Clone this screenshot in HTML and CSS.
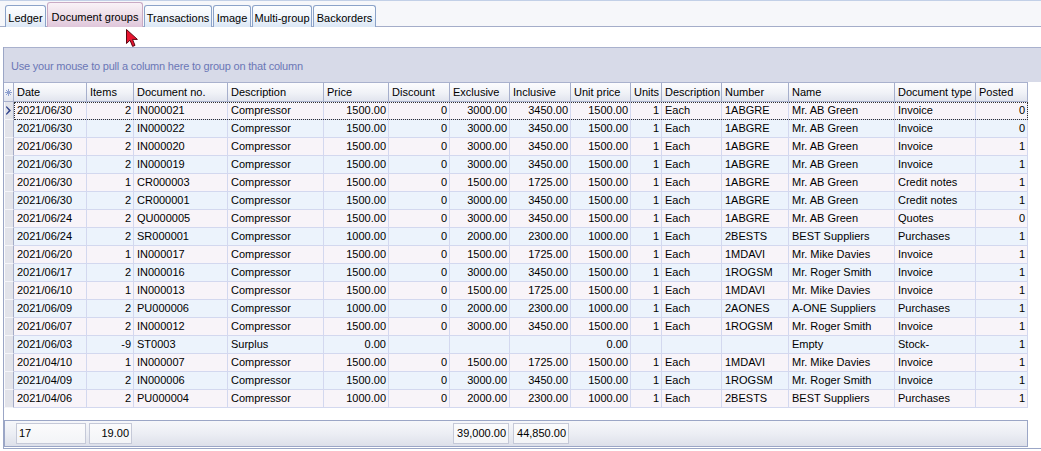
FILE: index.html
```html
<!DOCTYPE html>
<html>
<head>
<meta charset="utf-8">
<link rel="stylesheet" href="styles.css">
</head>
<body>
<div class="topline"></div>
<div class="tabbar">
  <div class="tab w-ledger">Ledger</div>
  <div class="tab tab-active w-docgroups">Document groups</div>
  <div class="tab w-trans">Transactions</div>
  <div class="tab w-image">Image</div>
  <div class="tab w-multi">Multi-group</div>
  <div class="tab w-back">Backorders</div>
</div>
<div class="spacer"></div>
<div class="frame">
  <div class="grouppanel">Use your mouse to pull a column here to group on that column</div>
  <div class="hrow">
    <div class="hind"><svg width="7" height="7" viewBox="0 0 7 7"><path d="M3.5 0V7M0 3.5H7M1 1L6 6M6 1L1 6" stroke="#8ea0cf" stroke-width="1" fill="none"/></svg></div>
    <div>Date</div><div>Items</div><div>Document no.</div><div>Description</div><div>Price</div><div>Discount</div><div>Exclusive</div><div>Inclusive</div><div>Unit price</div><div>Units</div><div>Description</div><div>Number</div><div>Name</div><div>Document type</div><div>Posted</div>
  </div>
  <div class="rows">
    <div class="row focus"><div class="ind"><svg width="6" height="9" viewBox="0 0 6 9"><path d="M0.5 0L5 4.5L0.5 9L0 7.8L2.8 4.5L0 1.2Z" fill="#33458c"/></svg></div><div>2021/06/30</div><div>2</div><div>IN000021</div><div>Compressor</div><div>1500.00</div><div>0</div><div>3000.00</div><div>3450.00</div><div>1500.00</div><div>1</div><div>Each</div><div>1ABGRE</div><div>Mr. AB Green</div><div>Invoice</div><div>0</div></div>
    <div class="row"><div class="ind"></div><div>2021/06/30</div><div>2</div><div>IN000022</div><div>Compressor</div><div>1500.00</div><div>0</div><div>3000.00</div><div>3450.00</div><div>1500.00</div><div>1</div><div>Each</div><div>1ABGRE</div><div>Mr. AB Green</div><div>Invoice</div><div>0</div></div>
    <div class="row"><div class="ind"></div><div>2021/06/30</div><div>2</div><div>IN000020</div><div>Compressor</div><div>1500.00</div><div>0</div><div>3000.00</div><div>3450.00</div><div>1500.00</div><div>1</div><div>Each</div><div>1ABGRE</div><div>Mr. AB Green</div><div>Invoice</div><div>1</div></div>
    <div class="row"><div class="ind"></div><div>2021/06/30</div><div>2</div><div>IN000019</div><div>Compressor</div><div>1500.00</div><div>0</div><div>3000.00</div><div>3450.00</div><div>1500.00</div><div>1</div><div>Each</div><div>1ABGRE</div><div>Mr. AB Green</div><div>Invoice</div><div>1</div></div>
    <div class="row"><div class="ind"></div><div>2021/06/30</div><div>1</div><div>CR000003</div><div>Compressor</div><div>1500.00</div><div>0</div><div>1500.00</div><div>1725.00</div><div>1500.00</div><div>1</div><div>Each</div><div>1ABGRE</div><div>Mr. AB Green</div><div>Credit notes</div><div>1</div></div>
    <div class="row"><div class="ind"></div><div>2021/06/30</div><div>2</div><div>CR000001</div><div>Compressor</div><div>1500.00</div><div>0</div><div>3000.00</div><div>3450.00</div><div>1500.00</div><div>1</div><div>Each</div><div>1ABGRE</div><div>Mr. AB Green</div><div>Credit notes</div><div>1</div></div>
    <div class="row"><div class="ind"></div><div>2021/06/24</div><div>2</div><div>QU000005</div><div>Compressor</div><div>1500.00</div><div>0</div><div>3000.00</div><div>3450.00</div><div>1500.00</div><div>1</div><div>Each</div><div>1ABGRE</div><div>Mr. AB Green</div><div>Quotes</div><div>0</div></div>
    <div class="row"><div class="ind"></div><div>2021/06/24</div><div>2</div><div>SR000001</div><div>Compressor</div><div>1000.00</div><div>0</div><div>2000.00</div><div>2300.00</div><div>1000.00</div><div>1</div><div>Each</div><div>2BESTS</div><div>BEST Suppliers</div><div>Purchases</div><div>1</div></div>
    <div class="row"><div class="ind"></div><div>2021/06/20</div><div>1</div><div>IN000017</div><div>Compressor</div><div>1500.00</div><div>0</div><div>1500.00</div><div>1725.00</div><div>1500.00</div><div>1</div><div>Each</div><div>1MDAVI</div><div>Mr. Mike Davies</div><div>Invoice</div><div>1</div></div>
    <div class="row"><div class="ind"></div><div>2021/06/17</div><div>2</div><div>IN000016</div><div>Compressor</div><div>1500.00</div><div>0</div><div>3000.00</div><div>3450.00</div><div>1500.00</div><div>1</div><div>Each</div><div>1ROGSM</div><div>Mr. Roger Smith</div><div>Invoice</div><div>1</div></div>
    <div class="row"><div class="ind"></div><div>2021/06/10</div><div>1</div><div>IN000013</div><div>Compressor</div><div>1500.00</div><div>0</div><div>1500.00</div><div>1725.00</div><div>1500.00</div><div>1</div><div>Each</div><div>1MDAVI</div><div>Mr. Mike Davies</div><div>Invoice</div><div>1</div></div>
    <div class="row"><div class="ind"></div><div>2021/06/09</div><div>2</div><div>PU000006</div><div>Compressor</div><div>1000.00</div><div>0</div><div>2000.00</div><div>2300.00</div><div>1000.00</div><div>1</div><div>Each</div><div>2AONES</div><div>A-ONE Suppliers</div><div>Purchases</div><div>1</div></div>
    <div class="row"><div class="ind"></div><div>2021/06/07</div><div>2</div><div>IN000012</div><div>Compressor</div><div>1500.00</div><div>0</div><div>3000.00</div><div>3450.00</div><div>1500.00</div><div>1</div><div>Each</div><div>1ROGSM</div><div>Mr. Roger Smith</div><div>Invoice</div><div>1</div></div>
    <div class="row"><div class="ind"></div><div>2021/06/03</div><div>-9</div><div>ST0003</div><div>Surplus</div><div>0.00</div><div></div><div></div><div></div><div>0.00</div><div></div><div></div><div></div><div>Empty</div><div>Stock-</div><div>1</div></div>
    <div class="row"><div class="ind"></div><div>2021/04/10</div><div>1</div><div>IN000007</div><div>Compressor</div><div>1500.00</div><div>0</div><div>1500.00</div><div>1725.00</div><div>1500.00</div><div>1</div><div>Each</div><div>1MDAVI</div><div>Mr. Mike Davies</div><div>Invoice</div><div>1</div></div>
    <div class="row"><div class="ind"></div><div>2021/04/09</div><div>2</div><div>IN000006</div><div>Compressor</div><div>1500.00</div><div>0</div><div>3000.00</div><div>3450.00</div><div>1500.00</div><div>1</div><div>Each</div><div>1ROGSM</div><div>Mr. Roger Smith</div><div>Invoice</div><div>1</div></div>
    <div class="row"><div class="ind"></div><div>2021/04/06</div><div>2</div><div>PU000004</div><div>Compressor</div><div>1000.00</div><div>0</div><div>2000.00</div><div>2300.00</div><div>1000.00</div><div>1</div><div>Each</div><div>2BESTS</div><div>BEST Suppliers</div><div>Purchases</div><div>1</div></div>
  </div>
  <div class="footer">
    <div class="fcell f-date">17</div>
    <div class="fcell f-items">19.00</div>
    <div class="fcell f-excl">39,000.00</div>
    <div class="fcell f-incl">44,850.00</div>
  </div>
</div>
<svg class="cursor" width="14" height="19" viewBox="0 0 14 19"><path d="M0.5 0.5L0.5 14.5L4 11.2L6.6 17.4L9 16.4L6.5 10.4L11.4 10.4Z" fill="#e8142e" stroke="#5c0612" stroke-width="1" stroke-linejoin="round"/></svg>
</body>
</html>
```
FILE: styles.css
```css
html, body {
  margin: 0;
  padding: 0;
}
body {
  width: 1041px;
  height: 451px;
  overflow: hidden;
  position: relative;
  background: #ffffff;
  font-family: "Liberation Sans", Arial, sans-serif;
  font-size: 11px;
  color: #000;
}
.topline {
  height: 1px;
  background: #c2d0e7;
}
.tabbar {
  height: 26px;
  box-sizing: border-box;
  background: #f6f7fa;
  border-bottom: 1px solid #a4adc9;
  display: flex;
  align-items: flex-end;
  gap: 1px;
  padding-left: 5px;
}
.tab {
  height: 22px;
  box-sizing: border-box;
  border: 1px solid #8ba3c9;
  border-bottom: none;
  border-radius: 3px 3px 0 0;
  background: linear-gradient(#fdfeff, #f1f6fc 50%, #dbe7f5);
  text-align: center;
  padding-top: 4px;
  line-height: 16px;
  white-space: nowrap;
  margin-bottom: -1px;
}
.tab-active {
  height: 25px;
  padding-top: 6px;
  border-color: #c9aac4;
  background: linear-gradient(#f9f2f7, #eedfe9 50%, #dfc6da);
}
.w-ledger { width: 41px; }
.w-docgroups { width: 96px; }
.w-trans { width: 68px; }
.w-image { width: 38px; }
.w-multi { width: 60px; }
.w-back { width: 63px; }
.spacer {
  height: 20px;
}
.frame {
  margin-left: 3px;
  border-left: 1px solid #9ba6c6;
  border-bottom: 1px solid #9ba6c6;
  padding-bottom: 1px;
}
.grouppanel {
  height: 35px;
  box-sizing: border-box;
  border-top: 1px solid #a9b1cd;
  background: #d7dae8;
  color: #6b77b6;
  padding: 11px 0 0 7px;
  line-height: 14px;
  letter-spacing: -0.2px;
}
.hrow, .row, .footer {
  display: grid;
  grid-template-columns: 10px 73px 47px 94px 96px 65px 61px 60px 61px 60px 31px 60px 67px 106px 81px 52px;
  width: 1024px;
}
.hrow {
  height: 20px;
  box-sizing: border-box;
  border-top: 1px solid #a9b1cd;
  border-bottom: 1px solid #a9b1cd;
  background: linear-gradient(#fcfcfe, #f0f2f7 55%, #e1e4ee);
}
.hrow > div {
  border-right: 1px solid #a6afcc;
  padding-left: 3px;
  line-height: 18px;
  white-space: nowrap;
  overflow: hidden;
}
.hrow > .hind {
  padding: 0;
  display: flex;
  align-items: center;
  justify-content: center;
}
.rows .row {
  height: 18px;
  position: relative;
}
.rows .row:nth-child(odd) {
  background: #f8f4f9;
}
.rows .row:nth-child(even) {
  background: #ecf3fc;
}
.row > div {
  border-right: 1px solid #d3d8ef;
  border-bottom: 1px solid #d3d8ef;
  line-height: 17px;
  padding-left: 3px;
  white-space: nowrap;
  overflow: hidden;
}
.row > div:nth-child(3),
.row > div:nth-child(6),
.row > div:nth-child(7),
.row > div:nth-child(8),
.row > div:nth-child(9),
.row > div:nth-child(10),
.row > div:nth-child(11),
.row > div:nth-child(16) {
  text-align: right;
  padding-left: 0;
  padding-right: 2px;
}
.row > .ind {
  padding: 0;
  background: #e2e3ea;
  border-right: 1px solid #a3abc7;
  border-bottom: 1px solid #f5f5f9;
  box-shadow: inset 1px 0 #fbfbfd;
  display: flex;
  align-items: center;
  justify-content: center;
}
.row.focus::after {
  content: "";
  position: absolute;
  left: 10px;
  top: 0;
  right: 0;
  bottom: 0;
  border: 1px dotted #303030;
  pointer-events: none;
}
.footer {
  margin-top: 12px;
  height: 27px;
  box-sizing: border-box;
  border: 1px solid #9ba6c6;
  background: linear-gradient(#f6f7fa, #eceef4 50%, #dde0ea);
  padding-top: 2px;
}
.fcell {
  height: 21px;
  box-sizing: border-box;
  border: 1px solid #c5c9d8;
  background: linear-gradient(#fbfbfc, #f3f4f7);
  line-height: 19px;
  white-space: nowrap;
}
.f-date {
  grid-column: 2;
  margin: 0 2px 0 1px;
  padding-left: 2px;
}
.f-items {
  grid-column: 3;
  margin: 0 3px 0 1px;
  text-align: right;
  padding-right: 2px;
}
.f-excl {
  grid-column: 8;
  margin: 0 2px 0 2px;
  text-align: right;
  padding-right: 2px;
}
.f-incl {
  grid-column: 9;
  margin: 0 3px 0 2px;
  text-align: right;
  padding-right: 2px;
}
.cursor {
  position: absolute;
  left: 126px;
  top: 29px;
}
```
